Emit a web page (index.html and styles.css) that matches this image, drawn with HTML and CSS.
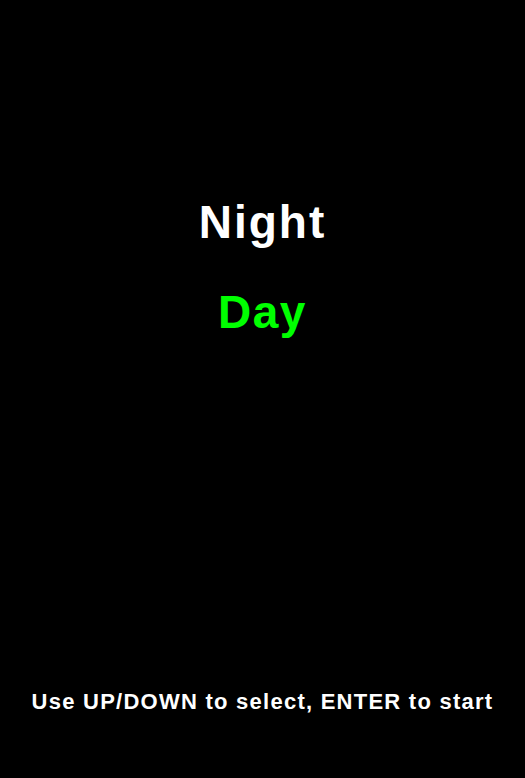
FILE: index.html
```html
<!DOCTYPE html>
<html>
<head>
<meta charset="utf-8">
<link rel="stylesheet" href="styles.css">
</head>
<body>
<main class="screen">
  <div class="menu">
    <div class="option">Night</div>
    <div class="option selected">Day</div>
  </div>
  <div class="hint">Use UP/DOWN to select, ENTER to start</div>
</main>
</body>
</html>
```
FILE: styles.css
```css
html, body {
  margin: 0;
  padding: 0;
  background: #000;
}
.screen {
  height: 778px;
  display: flex;
  flex-direction: column;
  align-items: center;
  font-family: "Liberation Sans", Arial, sans-serif;
  font-weight: bold;
  color: #fff;
  box-sizing: border-box;
  padding-top: 194px;
  padding-bottom: 63px;
}
.menu {
  display: flex;
  flex-direction: column;
  align-items: center;
  gap: 34px;
}
.option {
  font-size: 46px;
  line-height: 56px;
  letter-spacing: 2px;
  color: #fff;
}
.option.selected {
  color: #00ff00;
  letter-spacing: 1.5px;
}
.hint {
  margin-top: auto;
  font-size: 22px;
  line-height: 26px;
  letter-spacing: 1.25px;
}
```
